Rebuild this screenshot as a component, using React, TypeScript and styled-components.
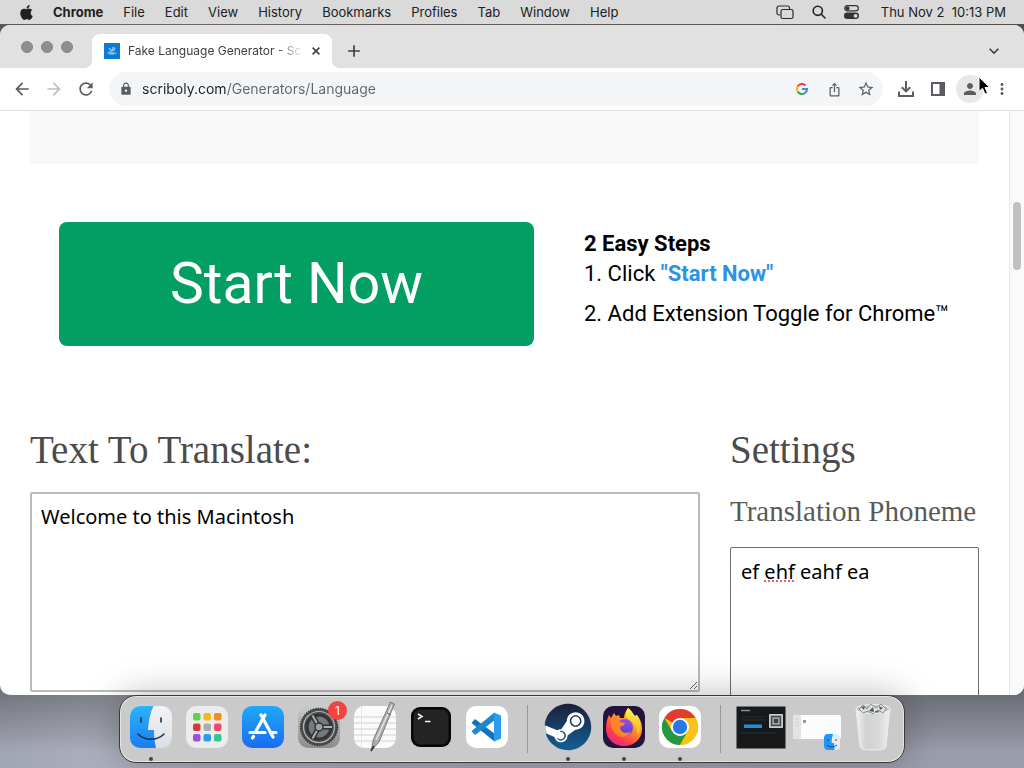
import React from "react";
import styled, { createGlobalStyle, css } from "styled-components";
import {
  MdAdd,
  MdArrowBack,
  MdArrowForward,
  MdIosShare,
  MdKeyboardArrowDown,
  MdLock,
  MdMoreVert,
  MdPerson,
  MdRefresh,
  MdStarBorder,
} from "react-icons/md";
import { FaApple, FaSteam } from "react-icons/fa";

const GlobalStyle = createGlobalStyle`
  * { box-sizing: border-box; }
  html, body, #root { height: 100%; }
  body {
    margin: 0;
    overflow: hidden;
    font-family: Inter, "Liberation Sans", sans-serif;
  }
  button, input, textarea { font-family: inherit; margin: 0; }
`;

/* ---------- Desktop ---------- */

const Desktop = styled.div`
  display: flex;
  flex-direction: column;
  height: 100vh;
  background: linear-gradient(90deg, rgba(150, 155, 170, 0.25), rgba(190, 194, 206, 0.3) 12%, rgba(120, 124, 138, 0.25) 90%),
    linear-gradient(#4a4038 0, #4a4038 60px, #64666c 90%, #a6a9b6 98%);
`;

const MenuBar = styled.header`
  display: flex;
  align-items: center;
  justify-content: space-between;
  flex: none;
  height: 24px;
  margin-bottom: 1px;
  padding: 0 18px;
  background: #dadada;
  color: #202020;
  font-size: 13px;
  line-height: 16px;
`;

const MenuGroup = styled.nav`
  display: flex;
  align-items: center;
  gap: 20px;

  svg { display: block; flex: none; margin-right: -2px; }
`;

const MenuButton = styled.button<{ $strong?: boolean }>`
  padding: 0;
  border: 0;
  background: none;
  color: inherit;
  font-size: 13px;
  line-height: 16px;
  font-weight: ${(p) => (p.$strong ? 700 : 400)};
`;

const StatusGroup = styled.div`
  display: flex;
  align-items: center;
  gap: 18px;

  svg { display: block; flex: none; }
`;

const Clock = styled.time`
  margin-left: 4px;
  white-space: pre;
`;

/* ---------- Browser window ---------- */

const BrowserWindow = styled.main`
  display: flex;
  flex-direction: column;
  flex: 1;
  min-height: 0;
  overflow: hidden;
  border-radius: 10px;
  background: #fff;
`;

const TabStrip = styled.div`
  display: flex;
  align-items: flex-end;
  flex: none;
  height: 43px;
  padding: 0 14px 0 21px;
  background: #e1e1e1;
`;

const WindowControls = styled.div`
  display: flex;
  gap: 8px;
  align-self: center;
  margin-right: 19px;
`;

const WindowControl = styled.button`
  width: 12px;
  height: 12px;
  padding: 0;
  border: 1px solid #868686;
  border-radius: 50%;
  background: #8e8e8e;
`;

const Tab = styled.div`
  position: relative;
  display: flex;
  align-items: center;
  width: 240px;
  height: 34px;
  padding: 0 8px 0 12px;
  border-radius: 8px 8px 0 0;
  background: #fff;

  &::before,
  &::after {
    content: "";
    position: absolute;
    bottom: 0;
    width: 8px;
    height: 8px;
  }
  &::before {
    left: -8px;
    background: radial-gradient(circle at 0 0, #e1e1e1 8px, #fff 8px);
  }
  &::after {
    right: -8px;
    background: radial-gradient(circle at 100% 0, #e1e1e1 8px, #fff 8px);
  }
`;

const TabTitle = styled.span`
  flex: 1;
  min-width: 0;
  margin: 0 4px 0 8px;
  white-space: nowrap;
  color: #3c4043;
  font-size: 12px;
  line-height: 16px;
  mask-image: linear-gradient(90deg, #000 calc(100% - 28px), transparent);
`;

const GlyphButton = styled.button<{ $size?: number; $color?: string }>`
  display: flex;
  align-items: center;
  justify-content: center;
  flex: none;
  width: ${(p) => p.$size ?? 32}px;
  height: ${(p) => p.$size ?? 32}px;
  padding: 0;
  border: 0;
  background: none;
  color: ${(p) => p.$color ?? "#5a5d61"};
`;

const NewTabArea = styled.div`
  display: flex;
  justify-content: space-between;
  align-items: center;
  flex: 1;
  height: 34px;
  padding-left: 12px;
`;

const Toolbar = styled.div`
  display: flex;
  align-items: center;
  flex: none;
  height: 43px;
  padding: 0 6px;
  border-bottom: 1px solid #dfe0e2;
  background: #fff;
`;

const AddressBar = styled.div`
  display: flex;
  align-items: center;
  flex: 1;
  min-width: 0;
  height: 34px;
  margin: 0 7px;
  padding: 0 1px 0 10px;
  border-radius: 17px;
  background: #f3f5f6;
  color: #5a5d61;

  > svg { flex: none; }
`;

const AddressInput = styled.input`
  flex: 1;
  min-width: 0;
  margin-left: 9px;
  padding: 0;
  border: 0;
  outline: 0;
  background: linear-gradient(90deg, #202124 84px, #62666a 84px);
  background-clip: text;
  -webkit-text-fill-color: transparent;
  font-size: 14px;
  line-height: 20px;
`;

const Avatar = styled.span`
  display: flex;
  align-items: center;
  justify-content: center;
  width: 28px;
  height: 28px;
  border-radius: 50%;
  background: #e8e8e9;
`;

/* ---------- Page ---------- */

const Viewport = styled.div`
  display: flex;
  flex: 1;
  min-height: 0;
`;

const Page = styled.div`
  flex: 1;
  min-width: 0;
  padding: 0 30px;
  overflow: hidden;
`;

const ScrollTrack = styled.div`
  flex: none;
  width: 15px;
  padding: 91px 3px 0;
  border-left: 1px solid #e8e8e8;
  background: #fafafa;
`;

const ScrollThumb = styled.div`
  height: 68px;
  border-radius: 4px;
  background: #c1c1c1;
`;

const Banner = styled.div`
  height: 53px;
  border-radius: 0 0 4px 4px;
  background: #f8f8f8;
`;

const Promo = styled.section`
  display: flex;
  align-items: center;
  gap: 50px;
  padding: 58px 0 0 29px;
  font-family: Roboto, sans-serif;
`;

const StartButton = styled.button`
  flex: 0 1 475px;
  height: 124px;
  padding: 0;
  border: 0;
  border-radius: 8px;
  background: #029e62;
  color: #fff;
  font-size: 57px;
  line-height: 68px;
`;

const Steps = styled.div`
  color: #000;
  font-size: 22px;
  line-height: 30px;
  white-space: nowrap;
`;

const Step = styled.p`
  margin: 0 0 10px;
`;

const StartWord = styled.b`
  color: #2b93e6;
`;

const Form = styled.section`
  display: grid;
  grid-template-columns: minmax(0, 1fr) 249px;
  gap: 30px;
  margin-top: 80px;
`;

const Field = styled.div`
  display: flex;
  flex-direction: column;
`;

const Heading = styled.h2`
  margin: 0;
  color: #4b4b4b;
  font-family: "Liberation Serif", serif;
  font-size: 39px;
  font-weight: 400;
  line-height: 48px;
  white-space: nowrap;
`;

const SubHeading = styled.h3`
  margin: 20px 0 19px;
  color: #5a5a5a;
  font-family: "Liberation Serif", serif;
  font-size: 29px;
  font-weight: 400;
  line-height: 34px;
  white-space: nowrap;
`;

const boxText = css`
  font-family: "Noto Sans", sans-serif;
  font-size: 20px;
  line-height: 28px;
  color: #000;
`;

const TextBox = styled.textarea<{ $main?: boolean }>`
  ${boxText}
  display: block;
  width: 100%;
  height: 200px;
  margin-top: ${(p) => (p.$main ? 18 : 0)}px;
  padding: ${(p) => (p.$main ? "9px" : "10px")};
  border: ${(p) => (p.$main ? "2px solid #bababa" : "1px solid #6e6e6e")};
  border-radius: 2px;
  background: #fff;
  outline: 0;
`;

const SpellArea = styled.div`
  position: relative;
`;

const SpellMark = styled.span`
  position: absolute;
  left: 34px;
  top: 33px;
  width: 30px;
  border-top: 2px dotted #e0607e;
`;

const Pointer = styled.svg`
  position: absolute;
  right: 33px;
  top: 76px;
  z-index: 3;
`;

/* ---------- Dock ---------- */

const Dock = styled.footer`
  position: relative;
  z-index: 2;
  display: flex;
  align-self: center;
  flex: none;
  height: 68px;
  margin-bottom: 5px;
  padding: 7px 3px 0;
  border: 1px solid #3a3a3d;
  border-radius: 17px;
  background: #cacaca;
  box-shadow: inset 0 0 0 1px #e4e4e4, 0 0 36px rgba(0, 0, 0, 0.28);
`;

const DockButton = styled.button<{ $running?: boolean }>`
  position: relative;
  display: flex;
  flex-direction: column;
  align-items: center;
  gap: 6px;
  width: 56px;
  padding: 0;
  border: 0;
  background: none;

  svg { display: block; flex: none; overflow: visible; }

  &::after {
    content: "";
    width: 4px;
    height: 4px;
    border-radius: 50%;
    background: ${(p) => (p.$running ? "#444" : "transparent")};
  }
`;

const DockRule = styled.div`
  width: 1px;
  height: 48px;
  margin: 2px 12px 0;
  background: #979797;
`;

const Badge = styled.span`
  position: absolute;
  top: -2px;
  right: 0;
  width: 19px;
  height: 19px;
  border-radius: 50%;
  background: #f4423e;
  color: #fff;
  font-size: 12px;
  line-height: 19px;
  text-align: center;
`;

/* ---------- Icon drawings ---------- */

const Icon = ({ children }: { children: React.ReactNode }) => (
  <svg width="48" height="48" viewBox="0 0 48 48" aria-hidden="true">
    {children}
  </svg>
);

const Gradient = ({ id, from, to }: { id: string; from: string; to: string }) => (
  <linearGradient id={id} x1="0" y1="0" x2="0" y2="1">
    <stop offset="0" stopColor={from} />
    <stop offset="1" stopColor={to} />
  </linearGradient>
);

const FinderIcon = () => (
  <Icon>
    <defs>
      <Gradient id="finderBlue" from="#2bb4fb" to="#1c7cf0" />
      <Gradient id="finderPale" from="#f4f4f6" to="#dcdfe6" />
    </defs>
    <rect x="3" y="3" width="42" height="42" rx="10" fill="url(#finderPale)" />
    <path d="M13 3H26.500C23 10 21.500 18 21 27H27C27 33 27.500 39 29 45H13A10 10 0 0 1 3 35V13A10 10 0 0 1 13 3Z" fill="url(#finderBlue)" />
    <path d="M14 15v4M34 15v4" stroke="#17334f" strokeWidth="1.600" strokeLinecap="round" />
    <path d="M11 31C18 38 30 38 37 31" fill="none" stroke="#17334f" strokeWidth="1.600" strokeLinecap="round" />
  </Icon>
);

const padColors = ["#5fd04f", "#f2b91c", "#f58a22", "#d63a38", "#a9adaf", "#f4476c", "#a04be0", "#2a9cf0", "#2fc98f"];

const LaunchpadIcon = () => (
  <Icon>
    <rect x="3" y="3" width="42" height="42" rx="10" fill="#ececec" />
    {padColors.map((color, i) => (
      <rect key={color} x={10 + (i % 3) * 10.5} y={10 + Math.floor(i / 3) * 10.5} width="7.500" height="7.500" rx="2" fill={color} />
    ))}
  </Icon>
);

const AppStoreIcon = () => (
  <Icon>
    <defs><Gradient id="storeBlue" from="#1fa9fa" to="#1a6cf0" /></defs>
    <rect x="3" y="3" width="42" height="42" rx="10" fill="url(#storeBlue)" />
    <g stroke="#fff" strokeWidth="3.200" strokeLinecap="round" fill="none">
      <path d="M26 12L17 28M22 12L34 34M11 29.500H26M33 29.500H37M14.500 33.500L13.500 35" />
    </g>
  </Icon>
);

const SettingsIcon = () => (
  <Icon>
    <defs><Gradient id="gearPlate" from="#c9cbca" to="#8a8d8b" /></defs>
    <rect x="3" y="3" width="42" height="42" rx="10" fill="url(#gearPlate)" />
    <circle cx="24" cy="24" r="18.500" fill="#4b4d4e" />
    <circle cx="24" cy="24" r="18.500" fill="none" stroke="#333537" strokeWidth="1.500" strokeDasharray="1.500 1" />
    <circle cx="24" cy="24" r="15.500" fill="none" stroke="#b4b6b6" strokeWidth="1.200" />
    <circle cx="24" cy="24" r="12" fill="#777a7a" stroke="#323436" strokeWidth="3" />
    <path d="M24 24L37 24M24 24L17.500 12.500M24 24L17.500 35.500" stroke="#303234" strokeWidth="5" />
    <path d="M24 24L37 24M24 24L17.500 12.500M24 24L17.500 35.500" stroke="#aeb1b1" strokeWidth="2" />
    <circle cx="24" cy="24" r="4" fill="#9da0a0" stroke="#303234" strokeWidth="1.500" />
  </Icon>
);

const TextEditIcon = () => (
  <Icon>
    <rect x="3" y="3" width="42" height="42" rx="10" fill="#fbfbfb" />
    <path d="M3 14H45M3 20H45M3 26H45M3 32H45M3 38H45" stroke="#d0d0d0" strokeWidth="1" />
    <path d="M10.500 3V45" stroke="#e4e4e4" />
    <path d="M39.500 -1L43.500 1L28 39L20 48L22.500 36Z" fill="#a9adaf" stroke="#686c6f" strokeWidth="0.800" />
    <path d="M41 2L25 37" stroke="#e2e5e6" strokeWidth="1.500" />
    <path d="M36 10L40 12" stroke="#5f6366" strokeWidth="1" />
    <path d="M23 43L20 48" stroke="#333" strokeWidth="1.500" />
  </Icon>
);

const TerminalIcon = () => (
  <Icon>
    <rect x="4" y="4" width="40" height="40" rx="9" fill="#070707" />
    <rect x="6.500" y="6.500" width="35" height="35" rx="7" fill="#232323" />
    <path d="M11 11L15 13.500L11 16M18 18.500H23.500" fill="none" stroke="#f5f5f5" strokeWidth="1.600" />
  </Icon>
);

const CodeIcon = () => (
  <Icon>
    <rect x="3" y="3" width="42" height="42" rx="10" fill="#fff" />
    <path d="M31.500 38.500L8.500 20L12 16L32 31Z" fill="#1173ba" />
    <path d="M31.500 9.500L8.500 28L12 32L32 17Z" fill="#1f87d2" />
    <path d="M31 9.500L38 12.500V35.500L31 38.500Z" fill="#2c9bea" />
  </Icon>
);

const SteamIcon = () => (
  <Icon>
    <defs><Gradient id="steamBlue" from="#1b1f3a" to="#145f96" /></defs>
    <circle cx="24" cy="24" r="22" fill="#fff" />
    <FaSteam x="0" y="0" width="48" height="48" size={48} fill="url(#steamBlue)" />
  </Icon>
);

const FirefoxIcon = () => (
  <Icon>
    <defs>
      <linearGradient id="foxFire" x1="0.900" y1="0" x2="0.200" y2="1">
        <stop offset="0" stopColor="#ffe23a" />
        <stop offset="0.400" stopColor="#ff9a24" />
        <stop offset="0.750" stopColor="#ff3f4c" />
        <stop offset="1" stopColor="#e81f82" />
      </linearGradient>
      <linearGradient id="foxTail" x1="0" y1="0" x2="0" y2="1">
        <stop offset="0" stopColor="#fff04a" />
        <stop offset="1" stopColor="#ffb02a" />
      </linearGradient>
      <Gradient id="foxGlobe" from="#9a4af2" to="#4f45c8" />
    </defs>
    <rect x="3" y="3" width="42" height="42" rx="10" fill="#25133f" />
    <path d="M28 5C32 8 33 11 35 13L37 12C40 16 42 20 42 26C42 36 34 43 24 43C14 43 6 36 6 26C6 20 7 16 9 12L11 15L14 10L16 13L19 12L20 15L24 15C24 11 26 8 28 5Z" fill="url(#foxFire)" />
    <circle cx="24.500" cy="24.500" r="8.500" fill="url(#foxGlobe)" />
    <path d="M11 16C15 14 18 17 20 19L25 20C25 22 22 23 20 24C20 29 26 32 31 28C28 35 18 36 14 29C11 25 11 20 11 16Z" fill="#ff8526" />
    <path d="M28 5C32 8 33 11 35 13L37 12C41 18 42 25 38 32C36 25 35 20 30 17C26 15 24 11 28 5Z" fill="url(#foxTail)" />
  </Icon>
);

const ChromeIcon = () => (
  <Icon>
    <rect x="3" y="3" width="42" height="42" rx="10" fill="#fff" />
    <circle cx="24" cy="24" r="18" fill="#fbc116" />
    <path d="M24 24L8.400 15A18 18 0 0 1 39.600 15Z" fill="#e33b2e" />
    <path d="M24 24L16.200 28.500L8.400 15A18 18 0 0 0 24 42L31.800 28.500Z" fill="#269746" />
    <path d="M24 15H39.600A18 18 0 0 1 24 42L31.800 28.500Z" fill="#fbc116" />
    <circle cx="24" cy="24" r="9" fill="#fff" />
    <circle cx="24" cy="24" r="7.200" fill="#2877e8" />
  </Icon>
);

const PreviewIcon = () => (
  <Icon>
    <rect x="-0.500" y="3.500" width="49" height="42" fill="#17191b" />
    <path d="M4 7.500H13" stroke="#8b8f91" strokeWidth="1.500" />
    <path d="M5 14H27M5 17H29M4 30H40" stroke="#2b3034" strokeWidth="1" />
    <rect x="7" y="21.500" width="18" height="3.500" fill="#1c8fe0" />
    <rect x="32" y="11" width="14" height="14" rx="1" fill="#c8cccd" />
    <rect x="34.500" y="13.500" width="9" height="9" fill="#9a9fa1" stroke="#44484a" strokeWidth="1.500" />
    <rect x="37" y="16" width="4" height="4" fill="#3d4143" />
  </Icon>
);

const MinimizedIcon = () => (
  <Icon>
    <rect x="0" y="12" width="48" height="24" rx="2" fill="#fcfcfc" />
    <rect x="0" y="12" width="8" height="24" rx="2" fill="#e3e3e3" />
    <path d="M2 16H6M2 19H5M2 22H6" stroke="#d0d0d0" />
    <rect x="10" y="17" width="3" height="3" fill="#9a9a9a" />
    <rect x="31" y="31" width="16" height="16" rx="4" fill="#e6ecf4" />
    <path d="M35 31H40C39 34 38.500 37 38.500 40H41L41.500 47H35A4 4 0 0 1 31 43V35A4 4 0 0 1 35 31Z" fill="#2196f5" />
    <path d="M35 36V38M43 36V38M34 42C37 44.500 41 44.500 44 42" stroke="#17496f" fill="none" />
  </Icon>
);

const TrashIcon = () => (
  <Icon>
    <defs>
      <linearGradient id="binSide">
        <stop offset="0" stopColor="#f2f2f2" />
        <stop offset="0.300" stopColor="#d2d2d2" />
        <stop offset="0.700" stopColor="#dadada" />
        <stop offset="1" stopColor="#f0f0f0" />
      </linearGradient>
    </defs>
    <path d="M7 5H41L37 43C36.500 46 34 47 24 47C14 47 11.500 46 11 43Z" fill="url(#binSide)" stroke="#ededed" />
    <ellipse cx="24" cy="6" rx="17" ry="4.500" fill="#c2c4c4" stroke="#f2f2f2" />
    <path d="M10 6L14 2L18 6L22 1L27 5L32 1L37 6L34 10L29 7L24 11L19 8L14 10Z" fill="#dfe2e2" stroke="#777b7b" strokeWidth="0.800" />
    <path d="M12 4L16 3L15 7ZM20 8L24 4L25 9ZM30 3L34 5L31 7ZM26 8L30 8L28 10Z" fill="#555a5a" />
  </Icon>
);

const DisplaysIcon = () => (
  <svg width="18" height="15" viewBox="0 0 18 15" fill="none" stroke="#2c2c2c" strokeWidth="1.200" aria-hidden="true">
    <path d="M4 10H3A2 2 0 0 1 1 8V3A2 2 0 0 1 3 1H11.500A2 2 0 0 1 13.500 3V4" />
    <rect x="5" y="4.500" width="12" height="9" rx="1.800" />
  </svg>
);

const SearchIcon = () => (
  <svg width="14" height="14" viewBox="0 0 14 14" fill="none" stroke="#222" strokeWidth="1.600" strokeLinecap="round" aria-hidden="true">
    <circle cx="5.800" cy="5.800" r="4.600" />
    <path d="M9.300 9.300L13 13" />
  </svg>
);

const ControlCenterIcon = () => (
  <svg width="15" height="14" viewBox="0 0 15 14" aria-hidden="true">
    <rect x="0.700" y="0.700" width="13.600" height="5.200" rx="2.600" fill="none" stroke="#333" strokeWidth="1.200" />
    <circle cx="3.500" cy="3.300" r="2" fill="#333" />
    <rect x="0" y="7.600" width="15" height="6.400" rx="3.200" fill="#333" />
    <circle cx="11.600" cy="10.800" r="1.900" fill="#dadada" />
  </svg>
);

const Favicon = () => (
  <svg width="16" height="16" viewBox="0 0 16 16" aria-hidden="true">
    <rect width="16" height="16" fill="#0f7ad4" />
    <path d="M3 9.500C5 12.500 10 12.500 13 10C11 9 9 9.500 7 8Z" fill="#6dbcf5" />
    <path d="M5 5L8 8M9 4.500C11.500 4.500 11.500 7.500 8.500 7.500Z" fill="none" stroke="#8fd0ff" strokeWidth="1.200" />
  </svg>
);

const CloseIcon = () => (
  <svg width="8" height="8" viewBox="0 0 8 8" stroke="currentColor" strokeWidth="1.600" aria-hidden="true">
    <path d="M0.600 0.600L7.400 7.400M7.400 0.600L0.600 7.400" />
  </svg>
);

const GoogleIcon = () => (
  <svg width="12" height="12" viewBox="0 0 12 12" fill="none" strokeWidth="2" aria-hidden="true">
    <path d="M1.670 3.500A5 5 0 0 1 9.540 2.460" stroke="#ea4335" />
    <path d="M1.670 8.500A5 5 0 0 1 1.670 3.500" stroke="#fbbc05" />
    <path d="M9.210 9.830A5 5 0 0 1 1.670 8.500" stroke="#34a853" />
    <path d="M6 6H11A5 5 0 0 1 9.210 9.830" stroke="#4285f4" />
  </svg>
);

const DownloadIcon = () => (
  <svg width="18" height="18" viewBox="0 0 18 18" fill="none" stroke="#5a5d61" strokeWidth="2" aria-hidden="true">
    <path d="M9 1V11M4.800 7.200L9 11.400L13.200 7.200M2 11.500V16H16V11.500" />
  </svg>
);

const SidePanelIcon = () => (
  <svg width="16" height="16" viewBox="0 0 16 16" aria-hidden="true">
    <rect x="2" y="2" width="12" height="12" fill="none" stroke="#5a5d61" strokeWidth="2" />
    <rect x="9.500" y="2" width="5" height="12" fill="#5a5d61" />
  </svg>
);

/* ---------- App ---------- */

const menus = ["File", "Edit", "View", "History", "Bookmarks", "Profiles", "Tab", "Window", "Help"];

type DockApp = { name: string; icon: React.ReactNode; running?: boolean; badge?: string };

const dockGroups: DockApp[][] = [
  [
    { name: "Finder", icon: <FinderIcon />, running: true },
    { name: "Launchpad", icon: <LaunchpadIcon /> },
    { name: "App Store", icon: <AppStoreIcon /> },
    { name: "System Settings", icon: <SettingsIcon />, badge: "1" },
    { name: "TextEdit", icon: <TextEditIcon /> },
    { name: "Terminal", icon: <TerminalIcon /> },
    { name: "Visual Studio Code", icon: <CodeIcon /> },
  ],
  [
    { name: "Steam", icon: <SteamIcon />, running: true },
    { name: "Firefox", icon: <FirefoxIcon />, running: true },
    { name: "Google Chrome", icon: <ChromeIcon />, running: true },
  ],
  [
    { name: "Minimized sign-in window", icon: <PreviewIcon /> },
    { name: "Minimized Finder window", icon: <MinimizedIcon /> },
    { name: "Trash", icon: <TrashIcon /> },
  ],
];

export default function App() {
  return (
    <Desktop>
      <GlobalStyle />
      <MenuBar>
        <MenuGroup aria-label="Menu bar">
          <FaApple size={17} />
          <MenuButton $strong>Chrome</MenuButton>
          {menus.map((name) => (
            <MenuButton key={name}>{name}</MenuButton>
          ))}
        </MenuGroup>
        <StatusGroup>
          <DisplaysIcon />
          <SearchIcon />
          <ControlCenterIcon />
          <Clock>{"Thu Nov 2  10:13 PM"}</Clock>
        </StatusGroup>
      </MenuBar>

      <BrowserWindow>
        <TabStrip>
          <WindowControls>
            <WindowControl aria-label="Close window" />
            <WindowControl aria-label="Minimize window" />
            <WindowControl aria-label="Zoom window" />
          </WindowControls>
          <Tab>
            <Favicon />
            <TabTitle>Fake Language Generator - Sc</TabTitle>
            <GlyphButton $size={16} $color="#3c4043" aria-label="Close tab"><CloseIcon /></GlyphButton>
          </Tab>
          <NewTabArea>
            <GlyphButton $size={20} $color="#3c4043" aria-label="New tab"><MdAdd size={20} /></GlyphButton>
            <GlyphButton $size={32} $color="#3c4043" aria-label="Search tabs"><MdKeyboardArrowDown size={20} /></GlyphButton>
          </NewTabArea>
        </TabStrip>

        <Toolbar>
          <GlyphButton aria-label="Back"><MdArrowBack size={20} /></GlyphButton>
          <GlyphButton $color="#bcbec0" aria-label="Forward"><MdArrowForward size={20} /></GlyphButton>
          <GlyphButton aria-label="Reload"><MdRefresh size={20} /></GlyphButton>
          <AddressBar>
            <MdLock size={14} />
            <AddressInput aria-label="Address" defaultValue="scriboly.com/Generators/Language" spellCheck={false} />
            <GlyphButton aria-label="Search with Google"><GoogleIcon /></GlyphButton>
            <GlyphButton aria-label="Share"><MdIosShare size={15} /></GlyphButton>
            <GlyphButton aria-label="Bookmark"><MdStarBorder size={18} /></GlyphButton>
          </AddressBar>
          <GlyphButton aria-label="Downloads"><DownloadIcon /></GlyphButton>
          <GlyphButton aria-label="Side panel"><SidePanelIcon /></GlyphButton>
          <GlyphButton aria-label="Profile"><Avatar><MdPerson size={18} /></Avatar></GlyphButton>
          <GlyphButton aria-label="More"><MdMoreVert size={18} /></GlyphButton>
        </Toolbar>

        <Viewport>
          <Page>
            <Banner />
            <Promo>
              <StartButton>Start Now</StartButton>
              <Steps>
                <b>2 Easy Steps</b>
                <Step>1. Click <StartWord>"Start Now"</StartWord></Step>
                <Step>2. Add Extension Toggle for Chrome™</Step>
              </Steps>
            </Promo>
            <Form>
              <Field>
                <Heading><label htmlFor="source">Text To Translate:</label></Heading>
                <TextBox $main id="source" defaultValue="Welcome to this Macintosh" spellCheck={false} />
              </Field>
              <Field>
                <Heading>Settings</Heading>
                <SubHeading><label htmlFor="phoneme">Translation Phoneme</label></SubHeading>
                <SpellArea>
                  <TextBox id="phoneme" defaultValue="ef ehf eahf ea" spellCheck={false} />
                  <SpellMark />
                </SpellArea>
              </Field>
            </Form>
          </Page>
          <ScrollTrack><ScrollThumb /></ScrollTrack>
        </Viewport>
      </BrowserWindow>

      <Dock>
        {dockGroups.map((group, i) => (
          <React.Fragment key={i}>
            {i > 0 && <DockRule />}
            {group.map((app) => (
              <DockButton key={app.name} $running={app.running} aria-label={app.name}>
                {app.icon}
                {app.badge && <Badge>{app.badge}</Badge>}
              </DockButton>
            ))}
          </React.Fragment>
        ))}
      </Dock>

      <Pointer width="13" height="20" viewBox="0 0 13 20" aria-hidden="true">
        <path d="M1 1V15.500L4.500 12.300L7 18L9.500 17L7 11.500H11.800Z" fill="#000" stroke="#fff" strokeWidth="1" />
      </Pointer>
    </Desktop>
  );
}
